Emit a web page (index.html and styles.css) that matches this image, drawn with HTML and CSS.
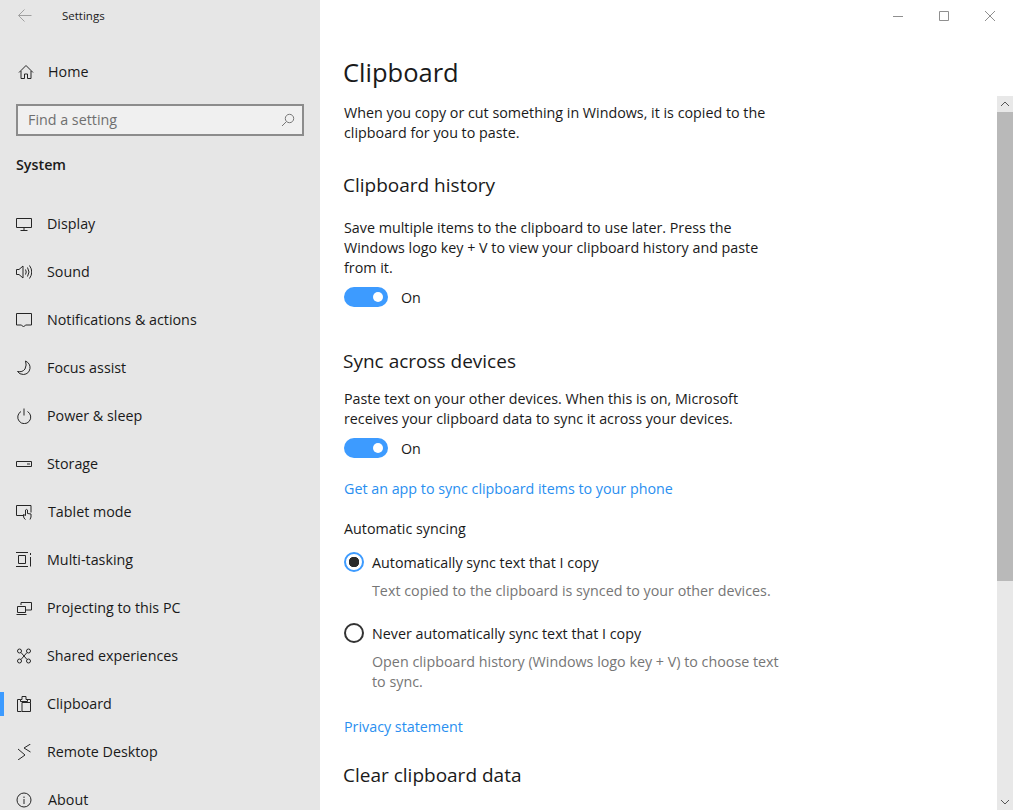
FILE: index.html
```html
<!DOCTYPE html>
<html lang="en">
<head>
<meta charset="utf-8">
<title>Settings</title>
<link rel="stylesheet" href="styles.css">
</head>
<body>
<div class="window">
  <aside class="sidebar">
    <div class="titlebar">
      <svg class="back" width="14" height="14" viewBox="0 0 14 14"><path d="M6.500.5.500 6.500l6 6M.5 6.500h13"/></svg>
      <span class="apptitle">Settings</span>
    </div>
    <div class="home">
      <svg class="ico" width="16" height="16" viewBox="0 0 16 16"><path d="M1 8.500 8 1.500l7 7M3 7v7.500h3.500V10h3v4.500H13V7"/></svg>
      <span>Home</span>
    </div>
    <div class="search">
      <span>Find a setting</span>
      <svg class="searchico" width="14" height="14" viewBox="0 0 14 14"><circle cx="8.500" cy="5.500" r="4.200"/><path d="M5.500 8.500 1 13"/></svg>
    </div>
    <div class="group">System</div>
    <nav class="nav">
      <div class="item"><svg class="ico" width="16" height="16" viewBox="0 0 16 16"><path d="M.5 2.500h15v9H.5zM8 11.500v3M4.500 14.500h7"/></svg><span>Display</span></div>
      <div class="item"><svg class="ico" width="16" height="16" viewBox="0 0 16 16"><path d="M.5 5.500h2.500L7 2v12L3 10.500H.5zM9.500 5.500q1.500 2.500 0 5M11.500 3.500q3 4.500 0 9M13.500 1.500q4.500 6.500 0 13"/></svg><span>Sound</span></div>
      <div class="item"><svg class="ico" width="16" height="16" viewBox="0 0 16 16"><path d="M.5 1.500h15v11.500H9.500L7.500 15l-2-2H.5z"/></svg><span>Notifications &amp; actions</span></div>
      <div class="item"><svg class="ico" width="16" height="16" viewBox="0 0 16 16"><path d="M9.500 1Q14.500 3.500 14 8.500 13 14 7.500 14.500 3.500 14.500 1.500 11.500 6.500 12.500 9 9 11 5 9.500 1z"/></svg><span>Focus assist</span></div>
      <div class="item"><svg class="ico" width="16" height="16" viewBox="0 0 16 16"><path d="M5 3.500a6.500 6.500 0 1 0 6.500 0M8 .5v7"/></svg><span>Power &amp; sleep</span></div>
      <div class="item"><svg class="ico" width="16" height="16" viewBox="0 0 16 16"><path d="M.5 5.500h15v5H.5zM11 8h3"/></svg><span>Storage</span></div>
      <div class="item"><svg class="ico" width="16" height="16" viewBox="0 0 16 16"><path d="M7.500 11.500H.5v-10h14.500v7M9.500 15.500q-2-1-2-3.500v-1.500l2 1V6q1.200-1.200 2 0v3.500l3.500.5v3l-1 2.500"/></svg><span class="shift">Tablet mode</span></div>
      <div class="item"><svg class="ico" width="16" height="16" viewBox="0 0 16 16"><path d="M0 .5h12M0 14.500h12M2.500 3.500h7v8h-7zM14.500 1v2M14.500 5v9.500"/></svg><span>Multi-tasking</span></div>
      <div class="item"><svg class="ico" width="16" height="16" viewBox="0 0 16 16"><path d="M5 5V2.500h10.500v7.500H10M1.500 6.500h8v6h-8zM.5 14.500h10"/></svg><span>Projecting to this PC</span></div>
      <div class="item"><svg class="ico" width="16" height="16" viewBox="0 0 16 16"><circle cx="3.500" cy="3" r="2"/><circle cx="12.500" cy="3" r="2"/><circle cx="3.500" cy="13" r="2"/><circle cx="12.500" cy="13" r="2"/><path d="m5 4.500 6 7M11 4.500l-6 7"/></svg><span>Shared experiences</span></div>
      <div class="item active"><svg class="ico" width="16" height="16" viewBox="0 0 16 16"><path d="M5.500 15.500H1.500V3.500h3M11 3.500h3.500v3M6 6.500h8.500v9H6zM4.500 5.500v-2h1.500V.5h4v3h1.500v2z"/></svg><span>Clipboard</span></div>
      <div class="item"><svg class="ico" width="16" height="16" viewBox="0 0 16 16"><path d="m2 5 7 6-7 5M14.500 0 8 4l6.500 4"/></svg><span>Remote Desktop</span></div>
      <div class="item"><svg class="ico" width="16" height="16" viewBox="0 0 16 16"><circle cx="8" cy="8" r="7"/><path d="M8 7v5M8 4.500v1.500"/></svg><span class="shift">About</span></div>
    </nav>
  </aside>
  <main class="main">
    <div class="winctrl">
      <svg width="10" height="10" viewBox="0 0 10 10"><path d="M0 5.500h10"/></svg>
      <svg width="10" height="10" viewBox="0 0 10 10"><path d="M.5.500h9v9h-9z"/></svg>
      <svg width="10" height="10" viewBox="0 0 10 10"><path d="m0 0 10 10M10 0 0 10"/></svg>
    </div>
    <div class="scrollbar">
      <div class="sbbtn"><svg width="10" height="6" viewBox="0 0 10 6"><path d="m1 5 4-4 4 4"/></svg></div>
      <div class="sbtrack"><div class="sbthumb"></div></div>
      <div class="sbbtn"><svg width="10" height="6" viewBox="0 0 10 6"><path d="m1 1 4 4 4-4"/></svg></div>
    </div>
    <div class="content">
      <h1>Clipboard</h1>
      <p class="intro">When you copy or cut something in Windows, it is copied to the clipboard for you to paste.</p>
      <h2 class="h-history">Clipboard history</h2>
      <p class="desc">Save multiple items to the clipboard to use later. Press the Windows logo key + V to view your clipboard history and paste from it.</p>
      <div class="toggle-row"><span class="toggle"><span class="knob"></span></span><span class="rowtext">On</span></div>
      <h2 class="h-sync">Sync across devices</h2>
      <p class="desc">Paste text on your other devices. When this is on, Microsoft receives your clipboard data to sync it across your devices.</p>
      <div class="toggle-row"><span class="toggle"><span class="knob"></span></span><span class="rowtext">On</span></div>
      <a class="link link-app">Get an app to sync clipboard items to your phone</a>
      <div class="autolabel">Automatic syncing</div>
      <div class="radio-row"><span class="radio checked"></span><span class="rowtext">Automatically sync text that I copy</span></div>
      <p class="sub">Text copied to the clipboard is synced to your other devices.</p>
      <div class="radio-row second"><span class="radio"></span><span class="rowtext">Never automatically sync text that I copy</span></div>
      <p class="sub">Open clipboard history (Windows logo key + V) to choose text to sync.</p>
      <a class="link link-privacy">Privacy statement</a>
      <h2 class="h-clear">Clear clipboard data</h2>
    </div>
  </main>
</div>
</body>
</html>
```
FILE: styles.css
```css
* { box-sizing: border-box; }
html, body { margin: 0; height: 810px; overflow: hidden; background: #fff; }
body { font-family: "Open Sans", "Noto Sans", sans-serif; font-size: 14.300px; line-height: 20px; color: #1a1a1a; }
.window { display: flex; width: 1013px; height: 810px; }

.sidebar { width: 320px; flex: none; background: #e6e6e6; padding-left: 16px; overflow: hidden; }
.titlebar { display: flex; align-items: center; height: 32px; padding-left: 2px; }
.back { fill: none; stroke: #a0a0a0; stroke-width: 1; }
.apptitle { margin-left: 30px; font-size: 11.500px; }
.home { display: flex; align-items: center; height: 20px; margin-top: 30px; padding-left: 2px; gap: 14px; }
.ico { flex: none; fill: none; stroke: #262626; stroke-width: 1; }
.search { display: flex; align-items: center; justify-content: space-between; width: 288px; height: 32px; margin-top: 22px; padding: 0 7px 0 10px; border: 2px solid #8c8c8c; background: #f0f0f0; color: #6f6f6f; }
.searchico { fill: none; stroke: #777; stroke-width: 1; }
.group { margin-top: 19px; font-weight: 600; height: 20px; }
.nav { margin-top: 25px; }
.item { position: relative; display: flex; align-items: center; height: 48px; gap: 15px; }
.item .shift { margin-left: 1px; }
.active::before { content: ""; position: absolute; left: -16px; top: 12px; width: 4px; height: 24px; background: #3d9bff; }

.main { position: relative; flex: 1; overflow: hidden; }
.winctrl { position: absolute; top: 11px; right: 18px; display: flex; gap: 36px; }
.winctrl svg { fill: none; stroke: #8f8f8f; stroke-width: 1; }
.scrollbar { position: absolute; top: 96px; right: 0; bottom: 0; width: 16px; display: flex; flex-direction: column; background: #e8e8e8; }
.sbbtn { flex: none; display: flex; align-items: center; justify-content: center; height: 16px; }
.sbbtn svg { fill: none; stroke: #555; stroke-width: 1; }
.sbtrack { flex: 1; }
.sbthumb { height: 469px; background: #b9b9b9; }

.content { width: 444px; margin-left: 24px; }
h1 { margin: 0 0 0 -1px; padding-top: 54px; height: 92px; font-size: 25.500px; line-height: 36px; font-weight: 400; }
h2 { margin: 0 0 0 -1px; font-size: 19px; line-height: 26px; font-weight: 400; }
p { margin: 0; }
.intro { margin-top: 11px; }
.h-history { margin-top: 29px; }
.desc { margin-top: 20px; }
.toggle-row { display: flex; align-items: center; gap: 13px; height: 20px; margin-top: 9px; }
.rowtext { padding-top: 2px; }
.toggle { display: flex; align-items: center; justify-content: flex-end; width: 44px; height: 20px; padding-right: 5px; border-radius: 10px; background: #3d9bff; }
.knob { width: 10px; height: 10px; border-radius: 50%; background: #fff; }
.h-sync { margin-top: 41px; }
.h-sync + .desc { margin-top: 15px; }
.link { display: block; color: #2a8ff0; height: 20px; }
.link-app { margin-top: 21px; }
.autolabel { margin-top: 20px; height: 20px; }
.radio-row { display: flex; align-items: center; gap: 8px; height: 20px; margin-top: 13px; }
.radio-row.second { margin-top: 22px; }
.radio { flex: none; width: 20px; height: 20px; border-radius: 50%; border: 2px solid #333; }
.radio.checked { border-color: #3d9bff; background: radial-gradient(circle, #2b2b2b 0 5px, #fff 5.500px); }
.sub { margin: 9px 0 0 28px; color: #767676; }
.link-privacy { margin-top: 25px; }
.h-clear { margin-top: 25px; }
```
